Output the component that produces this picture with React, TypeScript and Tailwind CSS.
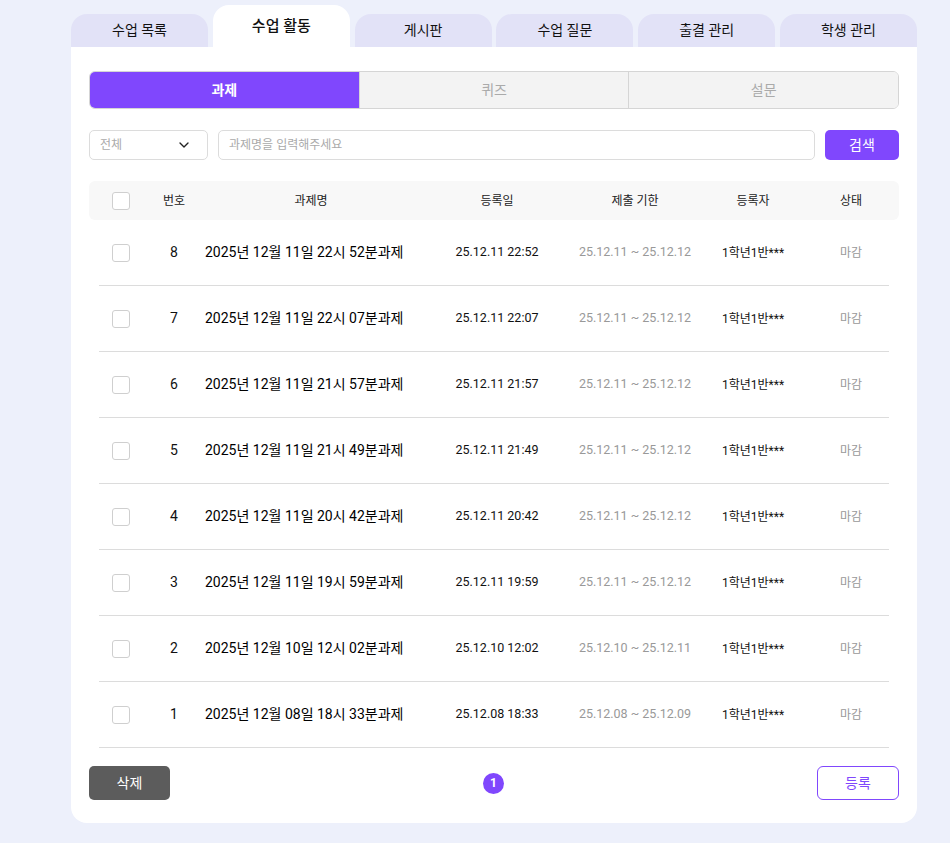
import { ChevronDown } from "lucide-react";

const TABS = ["수업 목록", "수업 활동", "게시판", "수업 질문", "출결 관리", "학생 관리"];
const SEGMENTS = ["과제", "퀴즈", "설문"];

const ROWS = [
  { no: 8, title: "2025년 12월 11일 22시 52분과제", date: "25.12.11 22:52", due: "25.12.11 ~ 25.12.12" },
  { no: 7, title: "2025년 12월 11일 22시 07분과제", date: "25.12.11 22:07", due: "25.12.11 ~ 25.12.12" },
  { no: 6, title: "2025년 12월 11일 21시 57분과제", date: "25.12.11 21:57", due: "25.12.11 ~ 25.12.12" },
  { no: 5, title: "2025년 12월 11일 21시 49분과제", date: "25.12.11 21:49", due: "25.12.11 ~ 25.12.12" },
  { no: 4, title: "2025년 12월 11일 20시 42분과제", date: "25.12.11 20:42", due: "25.12.11 ~ 25.12.12" },
  { no: 3, title: "2025년 12월 11일 19시 59분과제", date: "25.12.11 19:59", due: "25.12.11 ~ 25.12.12" },
  { no: 2, title: "2025년 12월 10일 12시 02분과제", date: "25.12.10 12:02", due: "25.12.10 ~ 25.12.11" },
  { no: 1, title: "2025년 12월 08일 18시 33분과제", date: "25.12.08 18:33", due: "25.12.08 ~ 25.12.09" },
];

const COLS = "grid grid-cols-[64px_42px_232px_140px_136px_100px_96px] items-center";

function Checkbox() {
  return <span className="block h-[18px] w-[18px] rounded-[3px] border border-[#cfcfcf] bg-white" />;
}

export default function App() {
  return (
    <div className="min-h-[843px] bg-[#edf0fb] pl-[71px] pt-[5px] font-['Roboto','Noto_Sans_CJK_KR',sans-serif] text-[#111]">
      <div className="w-[846px]">
        <div className="flex items-end gap-[4.8px]">
          {TABS.map((tab, i) =>
            i === 1 ? (
              <div
                key={tab}
                className="flex h-[42px] flex-1 items-start justify-center rounded-t-[16px] bg-white pt-[10px] text-[15px] font-medium"
              >
                {tab}
              </div>
            ) : (
              <div
                key={tab}
                className="flex h-[33px] flex-1 items-center justify-center rounded-t-[16px] bg-[#e2e2f7] text-[14px]"
              >
                {tab}
              </div>
            )
          )}
        </div>

        <div className="rounded-b-[16px] bg-white px-[18px] pb-[23px] pt-[24px]">
          <div className="flex h-[38px] overflow-hidden rounded-[6px] border border-[#d5d5d5]">
            {SEGMENTS.map((s, i) => (
              <div
                key={s}
                className={
                  i === 0
                    ? "flex flex-1 items-center justify-center bg-[#8047fd] text-[14px] font-bold text-white"
                    : "flex flex-1 items-center justify-center border-l border-[#d5d5d5] bg-[#f3f3f3] text-[14px] text-[#aaa]"
                }
              >
                {s}
              </div>
            ))}
          </div>

          <div className="mt-[21px] flex h-[30px] items-stretch">
            <div className="flex w-[119px] items-center justify-between rounded-[5px] border border-[#dcdcdc] px-[10px] text-[12px] text-[#aaa]">
              <span>전체</span>
              <ChevronDown size={16} strokeWidth={2} className="mr-[5px] text-[#222]" />
            </div>
            <div className="ml-[10px] flex flex-1 items-center rounded-[5px] border border-[#dcdcdc] px-[10px] text-[12px] text-[#aaa]">
              과제명을 입력해주세요
            </div>
            <button className="ml-[10px] w-[74px] rounded-[5px] bg-[#8047fd] text-[14px] text-white">검색</button>
          </div>

          <div className={`${COLS} mt-[21px] h-[39px] rounded-[6px] bg-[#f8f8f8] text-[12px] text-[#222]`}>
            <div className="flex justify-center">
              <Checkbox />
            </div>
            <div className="text-center">번호</div>
            <div className="text-center">과제명</div>
            <div className="text-center">등록일</div>
            <div className="text-center">제출 기한</div>
            <div className="text-center">등록자</div>
            <div className="text-center">상태</div>
          </div>

          {ROWS.map((r) => (
            <div key={r.no}>
              <div className={`${COLS} h-[65px]`}>
                <div className="flex justify-center">
                  <Checkbox />
                </div>
                <div className="text-center text-[14px]">{r.no}</div>
                <div className="pl-[10px] text-[14px] text-black">{r.title}</div>
                <div className="text-center text-[12.5px]">{r.date}</div>
                <div className="text-center text-[12.5px] text-[#999]">{r.due}</div>
                <div className="text-center text-[12px]">1학년1반***</div>
                <div className="text-center text-[12px] text-[#999]">마감</div>
              </div>
              <div className="mx-[10px] h-px bg-[#dcdcdc]" />
            </div>
          ))}

          <div className="mt-[18px] flex h-[34px] items-center justify-between">
            <button className="h-[34px] w-[81px] rounded-[5px] bg-[#5c5c5c] text-[14px] text-white">삭제</button>
            <span className="flex h-[21px] w-[21px] items-center justify-center rounded-full bg-[#8047fd] text-[12px] font-bold text-white">
              1
            </span>
            <button className="h-[34px] w-[82px] rounded-[6px] border border-[#8047fd] text-[14px] text-[#8047fd]">등록</button>
          </div>
        </div>
      </div>
    </div>
  );
}
